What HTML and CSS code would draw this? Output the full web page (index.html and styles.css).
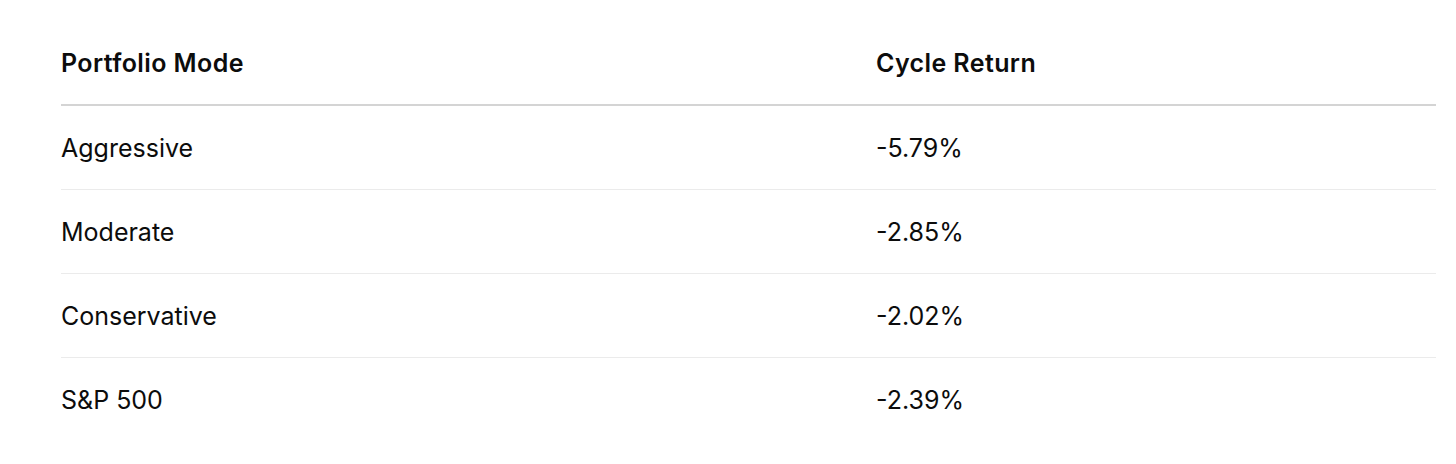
FILE: index.html
```html
<!DOCTYPE html>
<html>
<head>
<meta charset="utf-8">
<link rel="stylesheet" href="styles.css">
</head>
<body>
<div class="table">
  <div class="row head"><div class="cell">Portfolio Mode</div><div class="cell">Cycle Return</div></div>
  <div class="row"><div class="cell">Aggressive</div><div class="cell">-5.79%</div></div>
  <div class="row"><div class="cell">Moderate</div><div class="cell">-2.85%</div></div>
  <div class="row"><div class="cell">Conservative</div><div class="cell">-2.02%</div></div>
  <div class="row last"><div class="cell">S&amp;P 500</div><div class="cell">-2.39%</div></div>
</div>
</body>
</html>
```
FILE: styles.css
```css
html, body { margin: 0; background: #fff; }
body { font-family: Inter, "Noto Sans", sans-serif; color: #0c0c0c; }
.table { margin: 22px 20px 0 61px; }
.row {
  display: grid;
  grid-template-columns: 815px 1fr;
  height: 83px;
  align-items: center;
  border-bottom: 1px solid #ebebeb;
  font-size: 25px;
  line-height: 30px;
}
.row.head { height: 82px; border-bottom: 2px solid #d4d4d4; font-weight: 600; letter-spacing: 0.4px; }
.row.last { border-bottom: none; }
.cell { white-space: nowrap; }
```
